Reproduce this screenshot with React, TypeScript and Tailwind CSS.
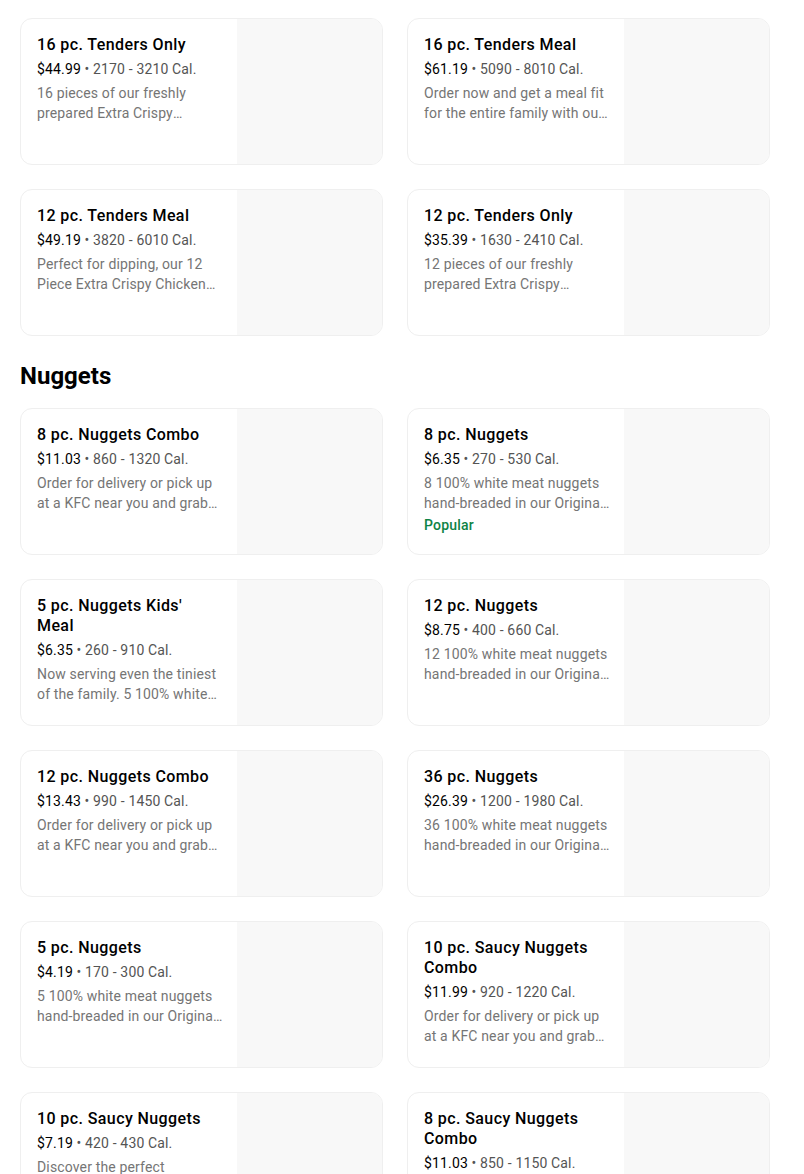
import React from "react";

type Item = { title: string; price: string; cal: string; desc: string; popular?: boolean };

const tenders: Item[] = [
  { title: "16 pc. Tenders Only", price: "$44.99", cal: "2170 - 3210 Cal.", desc: "16 pieces of our freshly prepared Extra Crispy Tenders, hand-breaded and perfect for dipping." },
  { title: "16 pc. Tenders Meal", price: "$61.19", cal: "5090 - 8010 Cal.", desc: "Order now and get a meal fit for the entire family with our 16 pc. Tenders Meal." },
  { title: "12 pc. Tenders Meal", price: "$49.19", cal: "3820 - 6010 Cal.", desc: "Perfect for dipping, our 12 Piece Extra Crispy Chicken Tenders meal." },
  { title: "12 pc. Tenders Only", price: "$35.39", cal: "1630 - 2410 Cal.", desc: "12 pieces of our freshly prepared Extra Crispy Tenders, hand-breaded." },
];

const nuggets: Item[] = [
  { title: "8 pc. Nuggets Combo", price: "$11.03", cal: "860 - 1320 Cal.", desc: "Order for delivery or pick up at a KFC near you and grab our nuggets combo." },
  { title: "8 pc. Nuggets", price: "$6.35", cal: "270 - 530 Cal.", desc: "8 100% white meat nuggets hand-breaded in our Original Recipe.", popular: true },
  { title: "5 pc. Nuggets Kids' Meal", price: "$6.35", cal: "260 - 910 Cal.", desc: "Now serving even the tiniest of the family. 5 100% white meat nuggets." },
  { title: "12 pc. Nuggets", price: "$8.75", cal: "400 - 660 Cal.", desc: "12 100% white meat nuggets hand-breaded in our Original Recipe." },
  { title: "12 pc. Nuggets Combo", price: "$13.43", cal: "990 - 1450 Cal.", desc: "Order for delivery or pick up at a KFC near you and grab our nuggets combo." },
  { title: "36 pc. Nuggets", price: "$26.39", cal: "1200 - 1980 Cal.", desc: "36 100% white meat nuggets hand-breaded in our Original Recipe." },
  { title: "5 pc. Nuggets", price: "$4.19", cal: "170 - 300 Cal.", desc: "5 100% white meat nuggets hand-breaded in our Original Recipe." },
  { title: "10 pc. Saucy Nuggets Combo", price: "$11.99", cal: "920 - 1220 Cal.", desc: "Order for delivery or pick up at a KFC near you and grab our saucy nuggets." },
  { title: "10 pc. Saucy Nuggets", price: "$7.19", cal: "420 - 430 Cal.", desc: "Discover the perfect combination of sauce and crunch." },
  { title: "8 pc. Saucy Nuggets Combo", price: "$11.03", cal: "850 - 1150 Cal.", desc: "Order for delivery or pick up at a KFC near you." },
];

function Card({ item }: { item: Item }) {
  return (
    <div className="flex h-[147px] overflow-hidden rounded-[12px] border border-[#efefef] bg-white">
      <div className="w-[216px] shrink-0 pl-[16px] pr-[14px] pt-[16px]">
        <div className="text-[16px] font-medium leading-[20px] tracking-[0.4px] text-black">{item.title}</div>
        <div className="mt-[4px] text-[14px] leading-[20px] tracking-[0.15px] text-[#545454]">
          <span className="text-black">{item.price}</span>
          <span> • </span>
          <span>{item.cal}</span>
        </div>
        <div className="mt-[4px] line-clamp-2 text-[14px] leading-[20px] tracking-[0.15px] text-[#757575]">{item.desc}</div>
        {item.popular && (
          <div className="mt-[2px] text-[14px] font-medium leading-[20px] tracking-[0.2px] text-[#0e8345]">Popular</div>
        )}
      </div>
      <div className="flex-1 bg-[#f8f8f8]" />
    </div>
  );
}

export default function App() {
  return (
    <div className="min-h-[1174px] bg-white pl-[20px] pt-[18px]" style={{ fontFamily: "Roboto, 'Liberation Sans', sans-serif" }}>
      <div className="grid w-[750px] grid-cols-2 gap-x-[24px] gap-y-[24px]">
        {tenders.map((t) => (
          <Card key={t.title} item={t} />
        ))}
      </div>
      <h2 className="mt-[24px] mb-[16px] text-[24px] font-bold leading-[32px] text-black">Nuggets</h2>
      <div className="grid w-[750px] grid-cols-2 gap-x-[24px] gap-y-[24px]">
        {nuggets.map((t) => (
          <Card key={t.title} item={t} />
        ))}
      </div>
    </div>
  );
}
